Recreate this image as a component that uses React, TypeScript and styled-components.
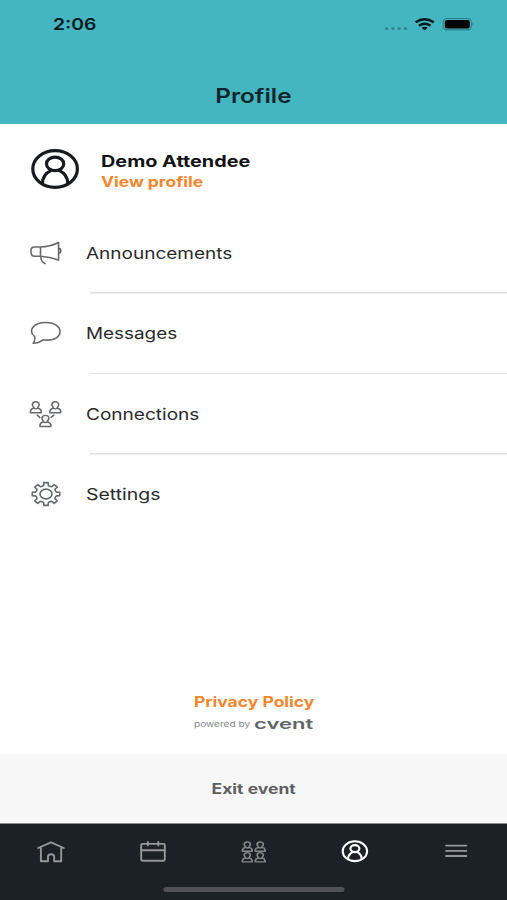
import React from "react";
import styled, { createGlobalStyle } from "styled-components";

const GlobalStyle = createGlobalStyle`
  * { box-sizing: border-box; }
  body { margin: 0; background: #fff; font-family: Inter, "Liberation Sans", sans-serif; }
`;

const Screen = styled.div`
  width: 507px;
  height: 900px;
  display: flex;
  flex-direction: column;
  background: #fff;
  overflow: hidden;
`;

const Header = styled.header`
  height: 124px;
  background: #44b6c1;
  color: #10262c;
`;

const StatusBar = styled.div`
  height: 48px;
  padding: 0 33px 0 53px;
  display: flex;
  align-items: center;
  justify-content: space-between;
  color: #06171a;
`;

const Label = styled.span<{
  $size: number;
  $stretch: number;
  $weight?: number;
  $color?: string;
  $origin?: string;
}>`
  display: block;
  width: max-content;
  white-space: nowrap;
  font-size: ${(p) => p.$size}px;
  line-height: 20px;
  font-weight: ${(p) => p.$weight ?? 400};
  color: ${(p) => p.$color ?? "inherit"};
  transform: scaleX(${(p) => p.$stretch});
  transform-origin: ${(p) => p.$origin ?? "left"} center;
`;

const TitleBar = styled.div`
  height: 76px;
  padding: 37.5px 0 0 0;
  display: flex;
  justify-content: center;
`;

const Account = styled.section`
  height: 88px;
  padding: 25px 0 0 31px;
  display: flex;
  gap: 20.5px;
`;

const AccountText = styled.div`
  padding-top: 2px;
  display: grid;
  grid-template-rows: 21px 20px;
`;

const Menu = styled.nav`
  height: 323px;
  padding-top: 1px;
  display: grid;
  grid-template-rows: repeat(4, 80.6px);
`;

const MenuRow = styled.a`
  display: grid;
  grid-template-columns: 57px 1fr;
  padding-left: 29px;
  color: #29292b;
`;

const RowIcon = styled.span`
  display: flex;
  align-items: center;
  padding-bottom: 1.6px;
`;

const RowText = styled.span<{ $line: boolean }>`
  display: flex;
  align-items: center;
  padding-bottom: 1.6px;
  background: ${(p) =>
    p.$line
      ? "linear-gradient(#e2e2e3, #e2e2e3) 4px 100% / 100% 1.6px no-repeat"
      : "none"};
`;

const Legal = styled.footer`
  margin-top: auto;
  height: 62px;
  padding-left: 1px;
  display: flex;
  flex-direction: column;
  align-items: center;
`;

const Powered = styled.div`
  width: 120px;
  height: 24px;
  display: grid;
  grid-template-columns: 60px 60px;
  align-items: center;
`;

const ExitButton = styled.button`
  height: 70px;
  flex: none;
  padding: 0;
  border: 0;
  border-bottom: 1px solid #8b8c8e;
  background: #f7f7f7;
  display: flex;
  align-items: center;
  justify-content: center;
  font-family: inherit;
`;

const TabBar = styled.nav`
  height: 76px;
  flex: none;
  background: #1c2027;
`;

const Tabs = styled.div`
  height: 63px;
  padding-top: 12px;
  display: grid;
  grid-template-columns: repeat(5, 101.4px);
  justify-items: center;
  align-items: start;
`;

const HomeIndicator = styled.div`
  width: 181px;
  height: 5px;
  margin: 0 auto;
  transform: translateX(0.5px);
  border-radius: 3px;
  background: #505257;
`;

const Icon = styled.svg<{ $color?: string; $stroke?: number }>`
  display: block;
  flex: none;
  fill: none;
  stroke: ${(p) => p.$color ?? "#66696b"};
  stroke-width: ${(p) => p.$stroke ?? 1.6};
  stroke-linecap: round;
  stroke-linejoin: round;
`;

const StatusIcons = () => (
  <Icon width="90" height="20" viewBox="384 14 90 20" $stroke={0}>
    <g fill="#30818b">
      <ellipse cx="386.6" cy="28.6" rx="1.7" ry="1.4" />
      <ellipse cx="392.9" cy="28.6" rx="1.7" ry="1.4" />
      <ellipse cx="399.2" cy="28.6" rx="1.7" ry="1.4" />
      <ellipse cx="405.4" cy="28.6" rx="1.7" ry="1.4" />
    </g>
    <g stroke="#06171a" strokeWidth="2.4" strokeLinecap="butt">
      <path d="M415.6 22.3Q424.7 16.1 433.8 22.3" />
      <path d="M418.9 25.7Q424.7 21.8 430.5 25.7" />
    </g>
    <path d="M421.6 27.8Q424.7 25.7 427.8 27.8L424.7 30.6Z" fill="#06171a" />
    <rect x="443.2" y="18.5" width="28.2" height="11.4" rx="3.6" stroke="#2d8089" strokeWidth="1.1" />
    <rect x="444.8" y="19.9" width="25" height="8.6" rx="2" fill="#020606" />
    <path d="M472.5 22.5Q474.5 24.2 472.5 26Z" fill="#2d8089" />
  </Icon>
);

const AvatarIcon = () => (
  <Icon width="49" height="40" viewBox="0 0 49 40" $color="#171b20" $stroke={3.2}>
    <ellipse cx="24.1" cy="20" rx="22.3" ry="18.3" />
    <ellipse cx="24.1" cy="14.9" rx="8.6" ry="6.8" />
    <path d="M11.4 34.4C11.6 26.6 16.8 23 20.3 21.4M27.9 21.4C31.4 23 36.6 26.6 36.8 34.4" />
  </Icon>
);

const MegaphoneIcon = () => (
  <Icon width="34" height="26" viewBox="0 0 34 26">
    <path d="M11.5 7H5.3C.7 7 .7 16.2 5.3 16.2H11.5M11.5 7V16.2M11.5 7C18 6.8 24 5.2 29.6 2.5V20C24 17.8 18 16.5 11.5 16.2M11.5 16.2C11.8 20 13 22.2 16 23.4M29.6 8.4C32.5 8.4 32.5 13.2 29.6 13.2" />
  </Icon>
);

const MessageIcon = () => (
  <Icon width="34" height="26" viewBox="0 0 34 26">
    <path d="M5.6 16.5C-.9 11.2 3.5 2.5 16.8 2.5C26.5 2.5 31 6.9 31 11.6C31 17.5 24.1 21.3 14.1 19.8C11.2 22 7.9 23.2 4.2 23.2C5.8 21 6.2 19 5.6 16.5Z" />
  </Icon>
);

const PERSON = "M-5.4 8.3V6.5Q-5 3.6-2 2.8V1.7Q-3.4.6-3.4-1.5C-3.4-6 3.4-6 3.4-1.5Q3.4.6 2 1.7V2.8Q5 3.6 5.4 6.5V8.3Z";
const COLLAR = "M-2.3 2.8Q0 4.4 2.3 2.8";

const ConnectionsIcon = () => (
  <Icon width="34" height="28" viewBox="0 0 34 28">
    {[
      [6.8, 5.8],
      [26.3, 5.8],
      [16.4, 19.5],
    ].map(([x, y]) => (
      <g key={x} transform={`translate(${x} ${y}) scale(1 .84)`}>
        <path d={PERSON} />
        <path d={COLLAR} />
      </g>
    ))}
    <path d="M8.3 15.2L10.8 17.3M24.9 15.2L22 17.3" />
  </Icon>
);

const teeth = Array.from({ length: 8 }, (_, i) => {
  const point = (deg: number, r: number) => {
    const a = ((i * 45 + deg) * Math.PI) / 180;
    return `${(17 + Math.cos(a) * r * 1.21).toFixed(2)} ${(13 + Math.sin(a) * r).toFixed(2)}`;
  };
  return `${i ? "L" : "M"}${point(-12, 8.9)}L${point(-9, 11.5)}L${point(9, 11.5)}L${point(12, 8.9)}Q${point(22.5, 7.8)} ${point(33, 8.9)}`;
}).join("");

const GearIcon = () => (
  <Icon width="34" height="26" viewBox="0 0 34 26">
    <path d={`${teeth}Z`} />
    <ellipse cx="17" cy="13" rx="6" ry="4.9" />
  </Icon>
);

const HomeIcon = () => (
  <Icon width="30" height="30" viewBox="0 0 30 30" $color="#95979a" $stroke={1.9}>
    <path d="M2.2 12L15 6.4L27.8 12M4.9 10.9V25.3H12V20.8C12 17.3 18.2 17.3 18.2 20.8V25.3H25.2V10.9" />
  </Icon>
);

const CalendarIcon = () => (
  <Icon width="30" height="30" viewBox="0 0 30 30" $color="#95979a" $stroke={1.9}>
    <rect x="4.2" y="7.9" width="23.6" height="16.8" rx="1.2" />
    <path d="M4.2 14.2H27.8M10.9 6V9.6M21.3 6V9.6" />
  </Icon>
);

const PeopleIcon = () => (
  <Icon width="30" height="30" viewBox="0 0 30 30" $color="#85878a" $stroke={1.9}>
    {[
      [9.3, 9.4],
      [22.2, 9.4],
      [9.3, 20],
      [22.2, 20],
    ].map(([x, y]) => (
      <g key={`${x}-${y}`} transform={`translate(${x} ${y}) scale(.9 .7)`}>
        <path d={PERSON} />
        <path d={COLLAR} />
      </g>
    ))}
  </Icon>
);

const ProfileTabIcon = () => (
  <Icon width="30" height="30" viewBox="0 0 30 30" $color="#fff" $stroke={2.1}>
    <ellipse cx="14.9" cy="15.2" rx="12.2" ry="9.9" />
    <ellipse cx="14.9" cy="12.6" rx="4.5" ry="3.5" />
    <path d="M8.1 23.1C8.2 19 10.9 16.9 12.7 16.1M17.1 16.1C18.9 16.9 21.6 19 21.7 23.1" />
  </Icon>
);

const MoreIcon = () => (
  <Icon width="30" height="30" viewBox="0 0 30 30" $color="#95979a" $stroke={1.8}>
    <path d="M5 9.6H25.4M5 14.8H25.4M5 20H25.4" />
  </Icon>
);

const CventWordmark = () => (
  <Label $size={14.5} $weight={600} $stretch={1.52} $color="#626467">
    cvent
  </Label>
);

const rows = [
  { text: "Announcements", icon: <MegaphoneIcon />, stretch: 1.187 },
  { text: "Messages", icon: <MessageIcon />, stretch: 1.18 },
  { text: "Connections", icon: <ConnectionsIcon />, stretch: 1.19 },
  { text: "Settings", icon: <GearIcon />, stretch: 1.215 },
];

export default function App() {
  return (
    <>
      <GlobalStyle />
      <Screen>
        <Header>
          <StatusBar>
            <Label $size={16} $weight={600} $stretch={1.21}>2:06</Label>
            <StatusIcons />
          </StatusBar>
          <TitleBar>
            <Label $size={20} $weight={600} $stretch={1.215} $origin="center">Profile</Label>
          </TitleBar>
        </Header>
        <Account>
          <AvatarIcon />
          <AccountText>
            <Label $size={16} $weight={700} $stretch={1.24} $color="#111214">Demo Attendee</Label>
            <Label $size={14} $weight={700} $stretch={1.245} $color="#f5852b">View profile</Label>
          </AccountText>
        </Account>
        <Menu>
          {rows.map((row, i) => (
            <MenuRow key={row.text}>
              <RowIcon>{row.icon}</RowIcon>
              <RowText $line={i < rows.length - 1}>
                <Label $size={16} $stretch={row.stretch}>{row.text}</Label>
              </RowText>
            </MenuRow>
          ))}
        </Menu>
        <Legal>
          <Label $size={14} $weight={700} $stretch={1.25} $origin="center" $color="#f5852b">Privacy Policy</Label>
          <Powered>
            <Label $size={8} $stretch={1.26} $color="#858789">powered by</Label>
            <CventWordmark />
          </Powered>
        </Legal>
        <ExitButton>
          <Label $size={14} $weight={700} $stretch={1.25} $origin="center" $color="#5e5f60">Exit event</Label>
        </ExitButton>
        <TabBar>
          <Tabs>
            <HomeIcon />
            <CalendarIcon />
            <PeopleIcon />
            <ProfileTabIcon />
            <MoreIcon />
          </Tabs>
          <HomeIndicator />
        </TabBar>
      </Screen>
    </>
  );
}
